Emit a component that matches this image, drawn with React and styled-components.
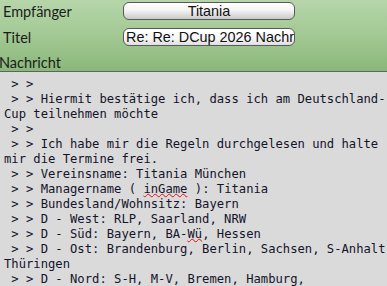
import React from 'react';
import styled, {createGlobalStyle} from 'styled-components';

const GlobalStyle = createGlobalStyle`
    html, body {
        margin: 0;
        padding: 0;
        background: #dadada;
        overflow: hidden;
    }
`;

const Page = styled.div`
    width: 387px;
    height: 286px;
    display: flex;
    flex-direction: column;
    overflow: hidden;
`;

const Header = styled.div`
    flex: none;
    height: 72px;
    box-sizing: border-box;
    background: linear-gradient(to bottom, #b6d6aa 0%, #a2c893 50%, #8ab87a 100%);
    border-bottom: 1px solid #626262;
    display: flex;
    flex-direction: column;
    padding-top: 2px;
`;

const FieldRow = styled.div`
    display: flex;
    align-items: center;
    height: 18px;
    margin-bottom: 8px;
`;

const Label = styled.div`
    width: 123px;
    padding-left: 3px;
    box-sizing: border-box;
    font-family: Lato, "Open Sans", sans-serif;
    font-size: 14.5px;
    color: #1c1c1c;
`;

const Field = styled.div`
    width: 172px;
    height: 18px;
    box-sizing: border-box;
    border: 1px solid #5a5a5a;
    border-radius: 6px;
    background: ${p => p.$shaded
        ? 'linear-gradient(to bottom, #ffffff 0%, #f4f4f4 45%, #c9c9c9 100%)'
        : 'linear-gradient(to bottom, #ffffff 0%, #f7f7f7 60%, #dedede 100%)'};
    font-family: "Liberation Sans", Arial, sans-serif;
    font-size: 14.4px;
    line-height: 16px;
    color: #111;
    text-align: ${p => p.$center ? 'center' : 'left'};
    padding: 0 2px;
    white-space: nowrap;
    overflow: hidden;
`;

const SectionLabel = styled.div`
    margin-top: auto;
    margin-left: -1px;
    height: 17px;
    font-family: Lato, "Open Sans", sans-serif;
    font-size: 14.5px;
    color: #1c1c1c;
`;

const MessageArea = styled.div`
    flex: 1;
    overflow: hidden;
    background: #dadada;
    padding-left: 4px;
    font-family: "DejaVu Sans Mono", "Liberation Mono", monospace;
    font-size: 12.2px;
    line-height: 15px;
    color: #14142a;
`;

const Lines = styled.div`
    margin-top: -10px;
`;

const Line = styled.div`
    white-space: pre;
    height: 15px;
`;

const Misspelled = styled.span`
    text-decoration: underline wavy #e01010;
    text-decoration-thickness: 1px;
    text-underline-offset: 0px;
`;

const lines = [
    ' > >',
    ' > >',
    ' > > Hiermit bestätige ich, dass ich am Deutschland-',
    'Cup teilnehmen möchte',
    ' > >',
    ' > > Ich habe mir die Regeln durchgelesen und halte',
    'mir die Termine frei.',
    ' > > Vereinsname: Titania München',
    <> &gt; &gt; Managername ( <Misspelled>inGame</Misspelled> ): Titania</>,
    ' > > Bundesland/Wohnsitz: Bayern',
    ' > > D - West: RLP, Saarland, NRW',
    <> &gt; &gt; D - Süd: Bayern, BA-<Misspelled>Wü</Misspelled>, Hessen</>,
    ' > > D - Ost: Brandenburg, Berlin, Sachsen, S-Anhalt,',
    'Thüringen',
    ' > > D - Nord: S-H, M-V, Bremen, Hamburg,',
];

const App = () => {
    return (
        <Page>
            <GlobalStyle />
            <Header>
                <FieldRow>
                    <Label>Empfänger</Label>
                    <Field $shaded $center>Titania</Field>
                </FieldRow>
                <FieldRow>
                    <Label>Titel</Label>
                    <Field>Re: Re: DCup 2026 Nachricht</Field>
                </FieldRow>
                <SectionLabel>Nachricht</SectionLabel>
            </Header>
            <MessageArea>
                <Lines>
                    {lines.map((l, i) => <Line key={i}>{l}</Line>)}
                </Lines>
            </MessageArea>
        </Page>
    );
};

export default App;
